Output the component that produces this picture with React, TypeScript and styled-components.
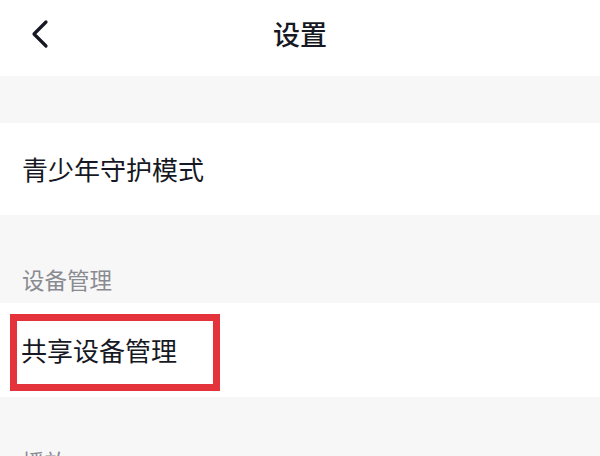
import styled, { createGlobalStyle } from "styled-components";

const Global = createGlobalStyle`
  html, body {
    margin: 0;
    padding: 0;
    background: #f7f7f8;
  }
  body {
    font-family: "Noto Sans CJK SC", "Noto Sans", sans-serif;
    color: #161823;
  }
`

const Page = styled.div`
  width: 600px;
  height: 456px;
  overflow: hidden;
  display: flex;
  flex-direction: column;
  background: #f7f7f8;
`

const Header = styled.div`
  height: 76px;
  flex-shrink: 0;
  box-sizing: border-box;
  padding-bottom: 9px;
  background: #fff;
  display: grid;
  grid-template-columns: 80px 1fr 80px;
  align-items: center;
`

const BackBtn = styled.div`
  padding-left: 30px;
  display: flex;
  align-items: center;
`

const Title = styled.div`
  text-align: center;
  font-size: 27px;
  font-weight: 500;
  line-height: 1;
`

const Spacer = styled.div<{ h: number }>`
  height: ${p => p.h}px;
  flex-shrink: 0;
`

const Row = styled.div<{ h: number; pl?: number }>`
  position: relative;
  height: ${p => p.h}px;
  flex-shrink: 0;
  background: #fff;
  display: flex;
  align-items: center;
  padding-left: ${p => p.pl ?? 22}px;
  font-size: 26px;
  line-height: 1;
`

const SectionLabel = styled.div`
  height: 88px;
  flex-shrink: 0;
  display: flex;
  align-items: flex-end;
  padding: 0 0 13px 22px;
  box-sizing: border-box;
  font-size: 22.5px;
  line-height: 1;
  color: #8a8b91;
`

const Highlight = styled.div`
  position: absolute;
  left: 10px;
  top: 11px;
  width: 210px;
  height: 77px;
  box-sizing: border-box;
  border: 7px solid #e5333b;
  pointer-events: none;
`

function Chevron() {
  return (
    <svg width="20" height="30" viewBox="0 0 20 30">
      <path d="M16 3 L4 15 L16 27" fill="none" stroke="#161823" strokeWidth="3.2" strokeLinecap="round" strokeLinejoin="round" />
    </svg>
  )
}

export default function App() {
  return (
    <Page>
      <Global />
      <Header>
        <BackBtn><Chevron /></BackBtn>
        <Title>设置</Title>
        <div />
      </Header>
      <Spacer h={47} />
      <Row h={92}>青少年守护模式</Row>
      <SectionLabel>设备管理</SectionLabel>
      <Row h={94} pl={21}>
        共享设备管理
        <Highlight />
      </Row>
      <SectionLabel>播放</SectionLabel>
    </Page>
  )
}
